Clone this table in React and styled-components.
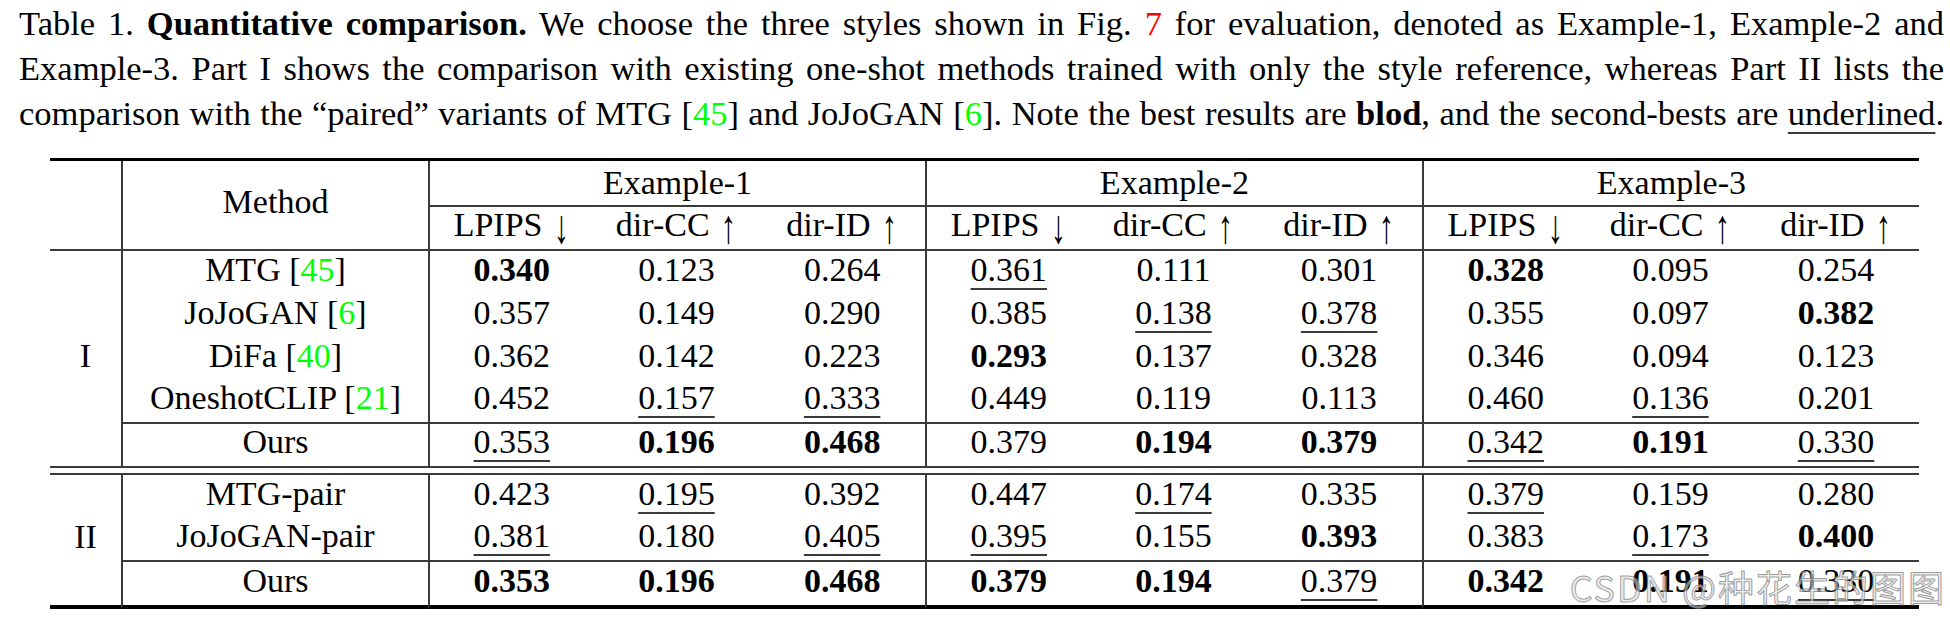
import React from 'react'
import styled, { createGlobalStyle } from 'styled-components'

const GlobalStyle = createGlobalStyle`
  html, body {
    margin: 0;
    padding: 0;
    background: #fff;
  }
  body {
    font-family: "Liberation Serif", "Times New Roman", "DejaVu Serif", serif;
    color: #000;
  }
`

const LINE = '#3a3a3a'

const groups = ['Example-1', 'Example-2', 'Example-3']
const metrics = [
  { label: 'LPIPS', arrow: '↓' },
  { label: 'dir-CC', arrow: '↑' },
  { label: 'dir-ID', arrow: '↑' },
]

// b = best (bold), u = second best (underlined)
const partOne = [
  { name: 'MTG', cite: '45', vals: ['0.340b', '0.123', '0.264', '0.361u', '0.111', '0.301', '0.328b', '0.095', '0.254'] },
  { name: 'JoJoGAN', cite: '6', vals: ['0.357', '0.149', '0.290', '0.385', '0.138u', '0.378u', '0.355', '0.097', '0.382b'] },
  { name: 'DiFa', cite: '40', vals: ['0.362', '0.142', '0.223', '0.293b', '0.137', '0.328', '0.346', '0.094', '0.123'] },
  { name: 'OneshotCLIP', cite: '21', vals: ['0.452', '0.157u', '0.333u', '0.449', '0.119', '0.113', '0.460', '0.136u', '0.201'] },
  { name: 'Ours', vals: ['0.353u', '0.196b', '0.468b', '0.379', '0.194b', '0.379b', '0.342u', '0.191b', '0.330u'] },
]

const partTwo = [
  { name: 'MTG-pair', vals: ['0.423', '0.195u', '0.392', '0.447', '0.174u', '0.335', '0.379u', '0.159', '0.280'] },
  { name: 'JoJoGAN-pair', vals: ['0.381u', '0.180', '0.405u', '0.395u', '0.155', '0.393b', '0.383', '0.173u', '0.400b'] },
  { name: 'Ours', vals: ['0.353b', '0.196b', '0.468b', '0.379b', '0.194b', '0.379u', '0.342b', '0.191b', '0.330u'] },
]

const App = () => {
  return (
    <Page>
      <GlobalStyle />
      <Caption>
        <Line>
          Table 1. <Strong>Quantitative comparison.</Strong> We choose the three styles shown in
          Fig. <Ref>7</Ref> for evaluation, denoted as Example-1, Example-2 and
        </Line>
        <Line>
          Example-3. Part I shows the comparison with existing one-shot methods trained with only
          the style reference, whereas Part II lists the
        </Line>
        <Line>
          comparison with the “paired” variants of MTG [<Cite>45</Cite>] and JoJoGAN [<Cite>6</Cite>].
          Note the best results are <Strong>blod</Strong>, and the second-bests are <U>underlined</U>.
        </Line>
      </Caption>

      <Table>
        <colgroup>
          <Col $w={71} />
          <Col $w={307} />
          {Array.from({ length: 9 }).map((_, i) => <Col key={i} $w={165.67} />)}
        </colgroup>
        <tbody>
          <Row $h={46}>
            <Cell rowSpan={2} $rule />
            <Cell rowSpan={2} $sep $rule>Method</Cell>
            {groups.map(g => (
              <Cell key={g} colSpan={3} $sep $rule $flat>{g}</Cell>
            ))}
          </Row>
          <Row $h={44}>
            {groups.map((g, gi) =>
              metrics.map((m, mi) => (
                <Cell key={gi + m.label} $sep={mi === 0} $rule>
                  {m.label} <Arrow>{m.arrow}</Arrow>
                </Cell>
              ))
            )}
          </Row>

          {partOne.map((r, i) => (
            <Row key={'a' + i} $h={43}>
              {i === 0 && <Cell rowSpan={5} $rule>I</Cell>}
              <Cell $sep $rule={i >= 3}>
                {r.name}{r.cite && <> [<Cite>{r.cite}</Cite>]</>}
              </Cell>
              {r.vals.map((v, j) => (
                <Cell key={j} $sep={j % 3 === 0} $rule={i >= 3}><Value v={v} /></Cell>
              ))}
            </Row>
          ))}

          <Row $h={7}>
            <Cell colSpan={11} $rule $gap />
          </Row>

          {partTwo.map((r, i) => (
            <Row key={'b' + i} $h={i === 2 ? 47 : 43}>
              {i === 0 && <Cell rowSpan={3} $rule="thick">II</Cell>}
              <Cell $sep $rule={i === 2 ? 'thick' : i === 1}>{r.name}</Cell>
              {r.vals.map((v, j) => (
                <Cell key={j} $sep={j % 3 === 0} $rule={i === 2 ? 'thick' : i === 1}>
                  <Value v={v} />
                </Cell>
              ))}
            </Row>
          ))}
        </tbody>
      </Table>

      <Watermark>CSDN @种花生的图图</Watermark>
    </Page>
  )
}

const Value = ({ v }) => {
  const flag = v.slice(-1)
  if (flag === 'b') return <Strong>{v.slice(0, -1)}</Strong>
  if (flag === 'u') return <U>{v.slice(0, -1)}</U>
  return v
}

const Page = styled.div`
  position: relative;
  width: 1950px;
  height: 625px;
  overflow: hidden;
  background: #fff;
`

const Caption = styled.div`
  padding: 1px 6px 0 19px;
  font-size: 34.5px;
  line-height: 45px;
`

const Line = styled.div`
  text-align: justify;
  text-align-last: justify;
`

const Strong = styled.b`
  font-weight: 700;
`

const Ref = styled.span`
  color: #ff0000;
`

const Cite = styled.span`
  color: #00ff00;
`

const U = styled.span`
  text-decoration: underline;
  text-decoration-thickness: 2px;
  text-underline-offset: 7px;
  text-decoration-color: ${LINE};
`

const Arrow = styled.span`
  display: inline-block;
  margin-left: 2px;
  transform: translateY(3px) scale(0.9, 1.4);
`

const Table = styled.table`
  margin: 22px 0 0 50px;
  width: 1868px;
  table-layout: fixed;
  border-collapse: separate;
  border-spacing: 0;
  border-top: 3px solid #000;
  font-size: 34px;
`

const Col = styled.col`
  width: ${p => p.$w}px;
`

const Row = styled.tr`
  height: ${p => p.$h}px;
`

const Cell = styled.td`
  padding: ${p => (p.$gap || p.$flat ? '0' : '0 0 6px')};
  line-height: 36px;
  text-align: center;
  vertical-align: middle;
  white-space: nowrap;
  border-left: ${p => (p.$sep ? `2px solid ${LINE}` : 'none')};
  border-bottom: ${p =>
    p.$rule === 'thick' ? '4px solid #000' : p.$rule ? `2px solid ${LINE}` : 'none'};
`

const Watermark = styled.div`
  position: absolute;
  right: 4px;
  top: 568px;
  font-family: "Noto Sans CJK SC", "Noto Sans", sans-serif;
  font-size: 36px;
  line-height: 1;
  letter-spacing: 2px;
  white-space: nowrap;
  color: rgba(225, 225, 225, 0.6);
  -webkit-text-stroke: 1px rgba(120, 120, 120, 0.7);
  pointer-events: none;
`

export default App
